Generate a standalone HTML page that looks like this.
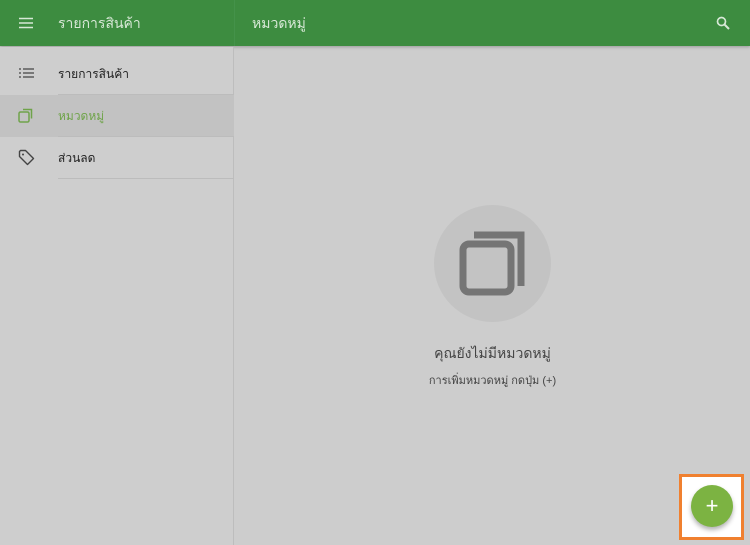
<!DOCTYPE html>
<html><head><meta charset="utf-8"><style>
*{margin:0;padding:0;box-sizing:border-box}
body{width:750px;height:545px;overflow:hidden;background:#cdcdcd;font-family:"Liberation Sans","Noto Sans CJK SC",sans-serif;position:relative}
.hdr{position:absolute;left:0;top:0;width:750px;height:46px;background:#3d8c40;box-shadow:0 1px 3px rgba(0,0,0,.25)}
.hdr .sep{position:absolute;left:234px;top:0;width:1px;height:46px;background:#44924a}
.t{position:absolute;color:#d7e8d6;font-size:14px}
.side{position:absolute;left:0;top:47px;width:234px;height:498px;background:#cecece;border-right:1px solid #bdbdbd}
.row{position:absolute;left:0;width:234px;height:42px}
.row .lbl{position:absolute;left:58px;top:12px;font-size:12px;color:#222}
.row .line{position:absolute;left:58px;right:0;bottom:0;height:1px;background:#bcbcbc}
.fabbox{position:absolute;left:679px;top:474px;width:65px;height:66px;border:3px solid #f0802f;background:#fff}
.fab{position:absolute;left:691px;top:485px;width:42px;height:42px;border-radius:50%;background:#7cb342;box-shadow:0 3px 5px rgba(0,0,0,.3);color:#fff;font-size:22px;text-align:center;line-height:41px}
</style></head><body>
<div class="hdr"><div class="sep"></div>
<svg style="position:absolute;left:19px;top:17px" width="14" height="12"><path d="M0 1.5h14M0 6h14M0 10.5h14" stroke="#d7e8d6" stroke-width="1.6"/></svg>
<div class="t" style="left:58px;top:13px">รายการสินค้า</div>
<div class="t" style="left:252px;top:13px">หมวดหมู่</div>
<svg style="position:absolute;left:716px;top:16px" width="14" height="14"><circle cx="5.5" cy="5.5" r="4" fill="none" stroke="#d7e8d6" stroke-width="1.7"/><path d="M8.5 8.5l4.5 4.5" stroke="#d7e8d6" stroke-width="2"/></svg>
</div>
<div class="side">
<div class="row" style="top:6px"><svg style="position:absolute;left:19px;top:15px" width="15" height="11"><path d="M0 1h2M4 1h11M0 5h2M4 5h11M0 9h2M4 9h11" stroke="#444" stroke-width="1.3"/></svg><div class="lbl">รายการสินค้า</div><div class="line"></div></div>
<div class="row" style="top:48px;background:#c2c2c2"><svg style="position:absolute;left:18px;top:13px" width="16" height="16"><rect x="1" y="4" width="10" height="10" rx="1.5" fill="none" stroke="#6fa34a" stroke-width="1.5"/><path d="M5 1.5h8.5v9" fill="none" stroke="#6fa34a" stroke-width="1.5"/></svg><div class="lbl" style="color:#6fa34a">หมวดหมู่</div><div class="line"></div></div>
<div class="row" style="top:90px"><svg style="position:absolute;left:18px;top:12px" width="17" height="17"><path d="M1.5 2.5v5l8 8 6-6-8-8h-5z" fill="none" stroke="#444" stroke-width="1.4" stroke-linejoin="round"/><circle cx="5" cy="5.5" r="1" fill="#444"/></svg><div class="lbl">ส่วนลด</div><div class="line"></div></div>
</div>
<div style="position:absolute;left:434px;top:205px;width:117px;height:117px;border-radius:50%;background:#c3c3c3"></div>
<svg style="position:absolute;left:458px;top:230px" width="68" height="68"><rect x="5" y="14" width="48" height="48" rx="6" fill="none" stroke="#757575" stroke-width="7"/><path d="M16 5h47v51" fill="none" stroke="#757575" stroke-width="7"/></svg>
<div style="position:absolute;left:340px;width:305px;top:343px;text-align:center;font-size:14px;color:#444">คุณยังไม่มีหมวดหมู่</div>
<div style="position:absolute;left:340px;width:305px;top:371px;text-align:center;font-size:11px;color:#444">การเพิ่มหมวดหมู่ กดปุ่ม (+)</div>
<div class="fabbox"></div>
<div class="fab">+</div>
</body></html>
